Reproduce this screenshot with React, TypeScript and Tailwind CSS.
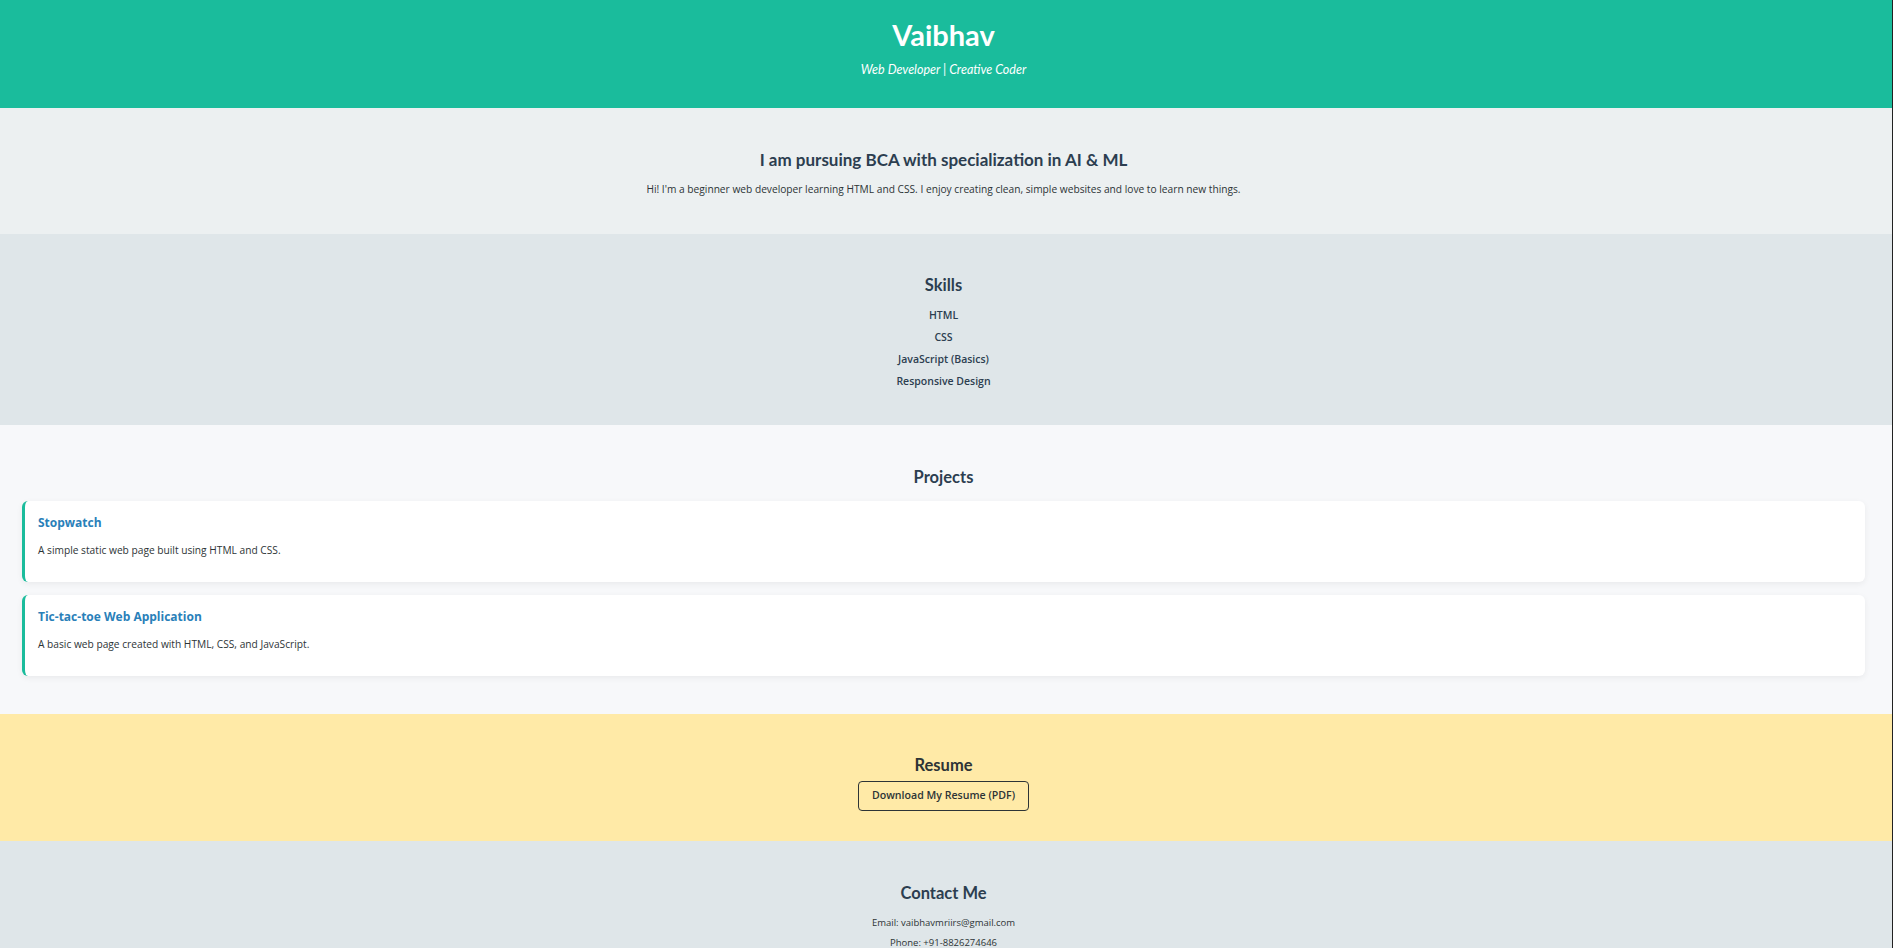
import React from "react";

const font = { fontFamily: '"Open Sans", "Noto Sans", Arial, sans-serif' };
const head = { fontFamily: 'Lato, "Open Sans", Arial, sans-serif' };

export default function App() {
  return (
    <div className="w-full min-h-screen bg-[#dfe6e9] border-r border-[#222]" style={font}>
      <header className="h-[108px] bg-[#1abc9c] text-white text-center pt-[17px] pr-[5px]">
        <h1 className="text-[29px] leading-[36px] font-bold" style={head}>Vaibhav</h1>
        <p className="mt-[7px] text-[12.5px] leading-[20px] italic" style={head}>Web Developer | Creative Coder</p>
      </header>

      <section className="h-[126px] bg-[#ecf0f1] text-center pt-[40px] pr-[5px]">
        <h2 className="text-[17px] leading-[24px] font-bold text-[#2c3e50]" style={head}>
          I am pursuing BCA with specialization in AI &amp; ML
        </h2>
        <p className="mt-[9px] text-[10.2px] leading-[16px] text-[#2d3436]">
          Hi! I'm a beginner web developer learning HTML and CSS. I enjoy creating clean, simple websites and love to learn new things.
        </p>
      </section>

      <section className="h-[191px] bg-[#dfe6e9] text-center pt-[39px] pr-[5px]">
        <h2 className="text-[16.5px] leading-[24px] font-bold text-[#2c3e50]" style={head}>Skills</h2>
        <ul className="mt-[7px] text-[10.5px] leading-[22px] font-semibold text-[#2c3e50]">
          <li>HTML</li>
          <li>CSS</li>
          <li>JavaScript (Basics)</li>
          <li>Responsive Design</li>
        </ul>
      </section>

      <section className="h-[289px] bg-[#f7f8fa] pt-[40px] pr-[5px]">
        <h2 className="text-center text-[16.5px] leading-[24px] font-bold text-[#2c3e50]" style={head}>Projects</h2>
        <div className="mt-[12px] mx-[22px] flex flex-col gap-[13px]">
          {[
            { t: "Stopwatch", d: "A simple static web page built using HTML and CSS." },
            { t: "Tic-tac-toe Web Application", d: "A basic web page created with HTML, CSS, and JavaScript." },
          ].map((p) => (
            <div
              key={p.t}
              className="h-[81px] bg-white rounded-[6px] border-l-[3px] border-[#1abc9c] shadow-[0_2px_6px_rgba(0,0,0,0.06)] pl-[13px] pt-[14px]"
            >
              <h3 className="text-[12px] leading-[16px] font-bold text-[#2980b9]">{p.t}</h3>
              <p className="mt-[11px] text-[10.2px] leading-[16px] text-[#2d3436]">{p.d}</p>
            </div>
          ))}
        </div>
      </section>

      <section className="h-[127px] bg-[#ffeaa7] text-center pt-[39px] pr-[5px]">
        <h2 className="text-[16.5px] leading-[24px] font-bold text-[#2d3436]" style={head}>Resume</h2>
        <div className="mt-[4px] flex justify-center">
          <a className="w-[171px] h-[30px] flex items-center justify-center border border-[#2d3436] rounded-[4px] text-[10.6px] font-semibold text-[#2d3436]">
            Download My Resume (PDF)
          </a>
        </div>
      </section>

      <section className="bg-[#dfe6e9] text-center pt-[40px] pb-[40px] pr-[5px]">
        <h2 className="text-[16.5px] leading-[24px] font-bold text-[#2c3e50]" style={head}>Contact Me</h2>
        <p className="mt-[10px] text-[9.5px] leading-[16px] text-[#2d3436]">Email: vaibhavmriirs@gmail.com</p>
        <p className="mt-[4px] text-[9.5px] leading-[16px] text-[#2d3436]">Phone: +91-8826274646</p>
      </section>
    </div>
  );
}
